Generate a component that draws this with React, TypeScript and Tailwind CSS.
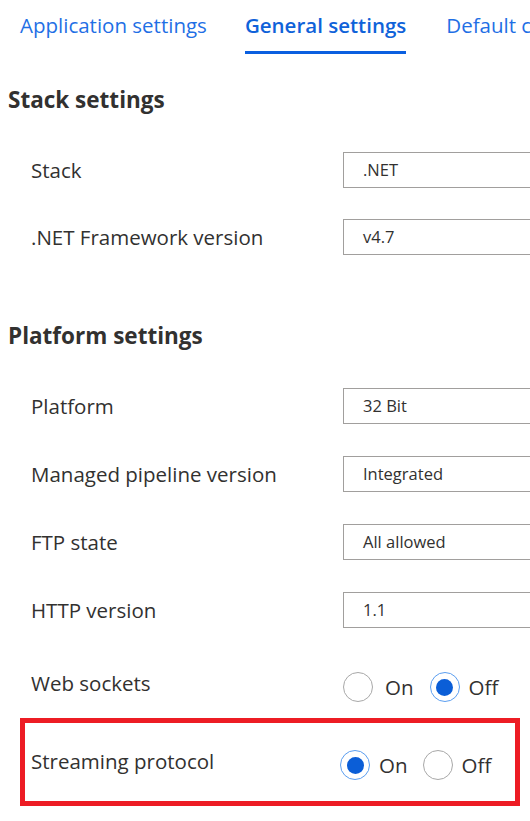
import React from "react";

const font = { fontFamily: '"Open Sans", "Noto Sans", sans-serif' };

const Radio = ({ checked }: { checked?: boolean }) => (
  <span
    className={
      "flex h-[30px] w-[30px] shrink-0 items-center justify-center rounded-full border-[1.5px] " +
      (checked ? "border-[#5b9ef0]" : "border-[#a8a8a8]")
    }
  >
    {checked && <span className="h-[17px] w-[17px] rounded-full bg-[#0b5ed7]" />}
  </span>
);

const Field = ({ label, value }: { label: string; value: string }) => (
  <div className="flex h-[36px] items-center">
    <div className="w-[343px] shrink-0 pl-[31px] text-[20.5px] text-[#323130]">{label}</div>
    <div className="flex h-[36px] w-[220px] shrink-0 items-center border border-[#a19f9d] pl-[19px] text-[16.5px] text-[#323130]">
      {value}
    </div>
  </div>
);

const Choice = ({ on, shift = 0 }: { on: boolean; shift?: number }) => (
  <div className="flex items-center text-[20.5px] text-[#323130]">
    <Radio checked={on} />
    <span className={shift ? "ml-[9px]" : "ml-[12px]"}>On</span>
    <span className={shift ? "ml-[15px]" : "ml-[16px]"}>
      <Radio checked={!on} />
    </span>
    <span className="ml-[9px]">Off</span>
  </div>
);

export default function App() {
  return (
    <div className="h-[821px] w-[530px] overflow-hidden bg-white" style={font}>
      <div className="flex h-[55px] whitespace-nowrap pl-[20px] text-[20.5px] text-[#1f6fe5]">
        <div className="pt-[10px]">Application settings</div>
        <div className="ml-[38px] flex flex-col">
          <span className="pt-[10px] font-semibold text-[#0f62d9]">General settings</span>
          <span className="mt-auto mb-[1px] h-[3px] bg-[#0a5fe0]" />
        </div>
        <div className="ml-[40px] pt-[10px]">Default c</div>
      </div>

      <h2 className="mt-[30px] pl-[8px] text-[22.5px] font-bold leading-[30px] text-[#323130]">
        Stack settings
      </h2>
      <div className="mt-[37px] flex flex-col gap-[31px]">
        <Field label="Stack" value=".NET" />
        <Field label=".NET Framework version" value="v4.7" />
      </div>

      <h2 className="mt-[66px] pl-[8px] text-[22.5px] font-bold leading-[30px] text-[#323130]">
        Platform settings
      </h2>
      <div className="mt-[37px] flex flex-col gap-[32px]">
        <Field label="Platform" value="32 Bit" />
        <Field label="Managed pipeline version" value="Integrated" />
        <Field label="FTP state" value="All allowed" />
        <Field label="HTTP version" value="1.1" />
      </div>

      <div className="mt-[44px] flex h-[30px] items-center">
        <div className="w-[343px] shrink-0 -translate-y-[4px] pl-[31px] text-[20.5px] text-[#323130]">
          Web sockets
        </div>
        <Choice on={false} />
      </div>

      <div className="ml-[20px] mt-[16px] flex h-[88px] w-[500px] items-center border-[5px] border-[#ed1c24] pt-[6px]">
        <div className="flex h-[30px] items-center">
          <div className="w-[315px] shrink-0 -translate-y-[4px] pl-[6px] text-[20.5px] text-[#323130]">
            Streaming protocol
          </div>
          <Choice on shift={1} />
        </div>
      </div>
    </div>
  );
}
